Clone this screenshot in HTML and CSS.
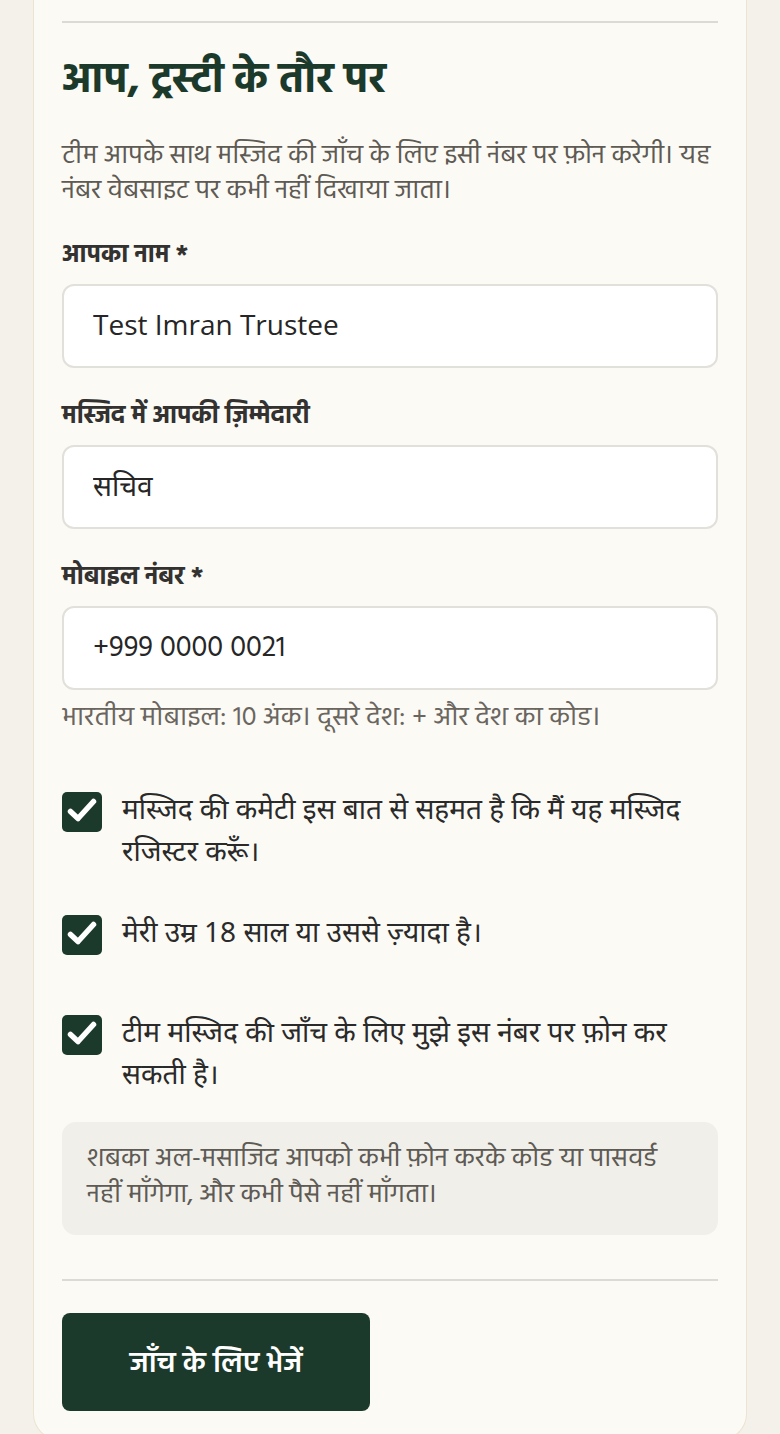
FILE: index.html
```html
<!DOCTYPE html>
<html lang="hi">
<head>
<meta charset="utf-8">
<title>ट्रस्टी</title>
<link rel="stylesheet" href="styles.css">
</head>
<body>
<main class="card">
  <div class="divider"></div>
  <h2 class="title">आप, ट्रस्टी के तौर पर</h2>
  <p class="intro">टीम आपके साथ मस्जिद की जाँच के लिए इसी नंबर पर फ़ोन करेगी। यह नंबर वेबसाइट पर कभी नहीं दिखाया जाता।</p>

  <div class="field field-first">
    <label class="label" for="name">आपका नाम *</label>
    <input class="input input-latin" id="name" type="text" value="Test Imran Trustee">
  </div>

  <div class="field">
    <label class="label" for="role">मस्जिद में आपकी ज़िम्मेदारी</label>
    <input class="input input-latin" id="role" type="text" value="सचिव">
  </div>

  <div class="field">
    <label class="label" for="phone">मोबाइल नंबर *</label>
    <input class="input input-phone" id="phone" type="tel" value="+999 0000 0021">
    <p class="hint">भारतीय मोबाइल: 10 अंक। दूसरे देश: + और देश का कोड।</p>
  </div>

  <div class="checks">
    <label class="check">
      <span class="box"><svg viewBox="0 0 40 40" width="40" height="40"><path d="M8.5 19.5L16 26.5L31.5 9.5" fill="none" stroke="#fff" stroke-width="5.5" stroke-linecap="round" stroke-linejoin="round"/></svg></span>
      <span class="check-text">मस्जिद की कमेटी इस बात से सहमत है कि मैं यह मस्जिद रजिस्टर करूँ।</span>
    </label>
    <label class="check">
      <span class="box"><svg viewBox="0 0 40 40" width="40" height="40"><path d="M8.5 19.5L16 26.5L31.5 9.5" fill="none" stroke="#fff" stroke-width="5.5" stroke-linecap="round" stroke-linejoin="round"/></svg></span>
      <span class="check-text">मेरी उम्र 18 साल या उससे ज़्यादा है।</span>
    </label>
    <label class="check">
      <span class="box"><svg viewBox="0 0 40 40" width="40" height="40"><path d="M8.5 19.5L16 26.5L31.5 9.5" fill="none" stroke="#fff" stroke-width="5.5" stroke-linecap="round" stroke-linejoin="round"/></svg></span>
      <span class="check-text">टीम मस्जिद की जाँच के लिए मुझे इस नंबर पर फ़ोन कर सकती है।</span>
    </label>
  </div>

  <div class="notice">शबका अल-मसाजिद आपको कभी फ़ोन करके कोड या पासवर्ड नहीं माँगेगा, और कभी पैसे नहीं माँगता।</div>

  <div class="divider divider-bottom"></div>

  <button class="submit" type="button">जाँच के लिए भेजें</button>
</main>
</body>
</html>
```

FILE: styles.css
```css
html, body {
  margin: 0;
  padding: 0;
}

body {
  background: #f4f1eb;
  font-family: "Hind", "Noto Sans", sans-serif;
  color: #2b2b2b;
  padding: 0 33px;
}

.card {
  background: #fcfaf5;
  border: 1.5px solid #ece3d0;
  border-top: 0;
  border-radius: 0 0 26px 26px;
  padding: 21px 28px 28px;
  display: flex;
  flex-direction: column;
  align-items: stretch;
}

.divider {
  height: 2px;
  background: #dddad3;
}

.title {
  margin: 36px 0 0;
  font-family: "Hind", sans-serif;
  font-size: 42px;
  font-weight: 700;
  line-height: 46px;
  color: #1c3a2b;
}

.intro {
  margin: 34px 0 0;
  font-size: 26.5px;
  line-height: 35px;
  color: #5e5a54;
}

.field {
  display: flex;
  flex-direction: column;
  margin-top: 33px;
}

.field-first {
  margin-top: 31px;
}

.label {
  font-size: 25px;
  font-weight: 700;
  line-height: 32px;
  color: #333230;
  margin-bottom: 12px;
}

.input {
  box-sizing: border-box;
  width: 100%;
  height: 84px;
  border: 2px solid #e2e0db;
  border-radius: 12px;
  background: #ffffff;
  padding: 0 29px;
  font-size: 28px;
  color: #262626;
  outline: none;
}

.input-latin {
  font-family: "Open Sans", "Noto Sans", sans-serif;
  padding-bottom: 5px;
}

.input-phone {
  font-family: "Hind", sans-serif;
  font-size: 29px;
  padding-top: 0;
}

.hint {
  margin: 13px 0 0;
  font-size: 27px;
  line-height: 32px;
  color: #6a665f;
}

.checks {
  display: flex;
  flex-direction: column;
  gap: 39px;
  margin-top: 52px;
}

.check {
  display: flex;
  align-items: flex-start;
  gap: 20px;
  min-height: 61px;
}

.box {
  flex: 0 0 40px;
  width: 40px;
  height: 40px;
  margin-top: 5px;
  border-radius: 5px;
  background: #1c3a2b;
  display: flex;
}

.check-text {
  font-family: "Noto Sans", "Open Sans", sans-serif;
  font-size: 28px;
  line-height: 42px;
  color: #2a2a2a;
}

.notice {
  margin-top: 28px;
  background: #f0efea;
  border-radius: 14px;
  padding: 19px 25px 22px;
  font-size: 26.5px;
  line-height: 36px;
  color: #5e5a54;
}

.divider-bottom {
  margin-top: 44px;
}

.submit {
  align-self: flex-start;
  margin-top: 32px;
  width: 308px;
  height: 98px;
  border: 0;
  border-radius: 8px;
  background: #1c3a2b;
  color: #ffffff;
  font-family: "Hind", sans-serif;
  font-size: 29px;
  font-weight: 600;
  padding: 4px 0 0;
}
```
